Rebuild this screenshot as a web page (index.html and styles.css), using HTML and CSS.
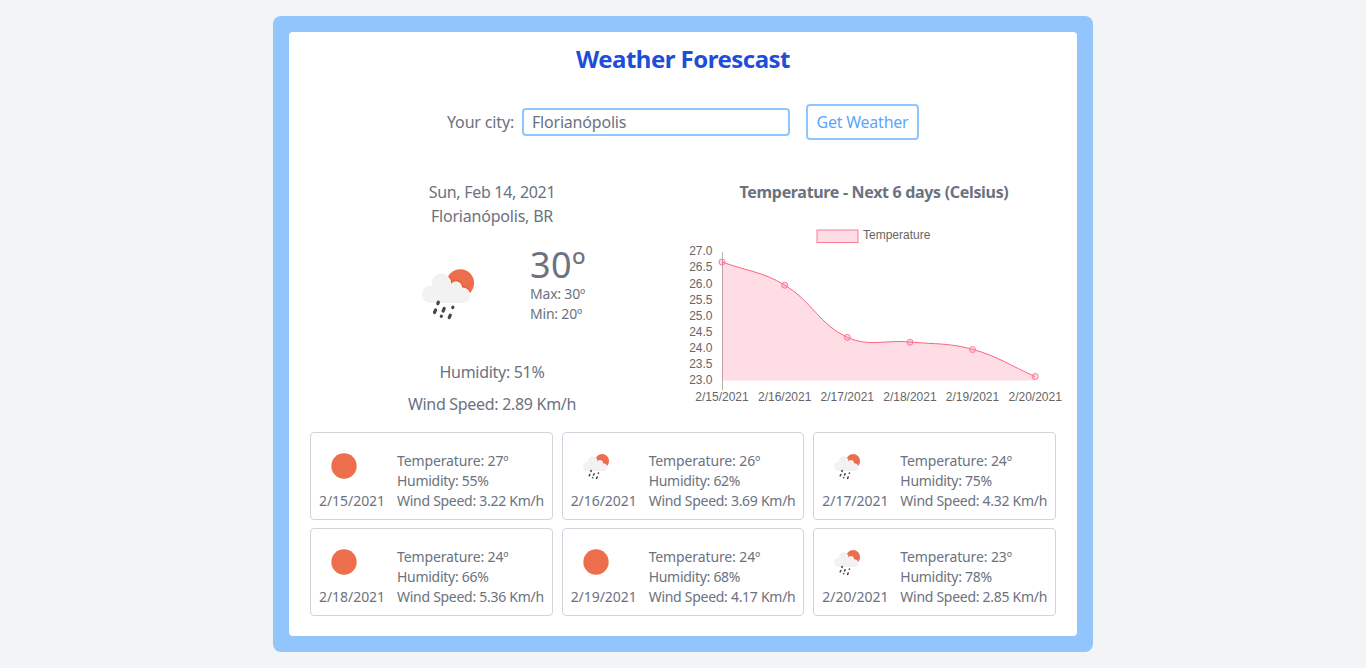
FILE: index.html
```html
<!DOCTYPE html>
<html lang="en">
<head>
<meta charset="utf-8">
<title>Weather Forescast</title>
<link rel="stylesheet" href="styles.css">
</head>
<body>
<svg class="defs" aria-hidden="true">
  <clipPath id="sun-clip"><circle cx="62.300" cy="40" r="13.800"/></clipPath>
  <symbol id="rain" viewBox="0 0 100 100">
    <circle cx="62.300" cy="40" r="13.800" fill="#ec6e4c"/>
    <g clip-path="url(#sun-clip)" fill="#e9502c"><circle cx="43.500" cy="40.300" r="10.600"/><circle cx="58" cy="44.300" r="7"/><circle cx="64.700" cy="52.300" r="8.700"/></g>
    <g fill="#f2f2f2"><circle cx="32.700" cy="51.300" r="8.700"/><circle cx="43.500" cy="40.300" r="9.700"/><circle cx="58" cy="44.300" r="6.100"/><circle cx="64.700" cy="52.300" r="7.700"/><path d="M32.700 60V46L40 42H58L65 50V60z"/></g>
    <path d="M40.400 59.200l-.6 1.500M37.600 67l-1.100 2.500M46.200 65.500l-1.100 2.500M43.400 73.200l-.1.200M54.900 64.100l-.2.400M52.300 72.200l-1.100 2.400" fill="none" stroke="#484848" stroke-width="3.200" stroke-linecap="round"/>
  </symbol>
  <symbol id="sun" viewBox="0 0 100 100"><circle cx="50" cy="50" r="25.4" fill="#ec6e4c"/></symbol>
</svg>
<main class="panel">
 <div class="content">
  <h1 class="title">Weather Forescast</h1>
  <form class="search">
    <label class="search-label" for="city">Your city:</label>
    <input class="search-input" id="city" value="Florianópolis">
    <button class="search-button" type="button">Get Weather</button>
  </form>
  <div class="overview">
    <section class="today">
      <p class="date">Sun, Feb 14, 2021</p>
      <p class="place">Florianópolis, BR</p>
      <div class="now">
        <svg class="icon-large"><use href="#rain"/></svg>
        <div class="temps">
          <p class="degrees">30º</p>
          <p class="range">Max: 30º</p>
          <p class="range">Min: 20º</p>
        </div>
      </div>
      <p class="humidity">Humidity: 51%</p>
      <p class="wind">Wind Speed: 2.89 Km/h</p>
    </section>
    <section class="trend">
      <h2 class="trend-title">Temperature - Next 6 days (Celsius)</h2>
      <svg class="chart" viewBox="684 220 380 190">
        <rect class="series" x="817" y="230" width="41" height="12.500"/>
        <text x="863" y="239">Temperature</text>
        <g text-anchor="end">
          <text x="712.500" y="255">27.0</text><text x="712.500" y="271">26.5</text><text x="712.500" y="288">26.0</text>
          <text x="712.500" y="304">25.5</text><text x="712.500" y="320">25.0</text><text x="712.500" y="336">24.5</text>
          <text x="712.500" y="352">24.0</text><text x="712.500" y="368">23.5</text><text x="712.500" y="384">23.0</text>
        </g>
        <path class="axis" d="M722.500 252V390"/>
        <path class="area" d="M722 262C747.100 271.200 762.100 271.400 784.700 285C812.300 301.600 819 324.400 847.300 337.300C869.100 347.200 885 339.600 910 342C935 344.400 948.500 342.700 972.500 349.300C998.500 356.500 1010 365.600 1035 376.500V380.500H722z"/>
        <path class="line" d="M722 262C747.100 271.200 762.100 271.400 784.700 285C812.300 301.600 819 324.400 847.300 337.300C869.100 347.200 885 339.600 910 342C935 344.400 948.500 342.700 972.500 349.300C998.500 356.500 1010 365.600 1035 376.500"/>
        <g class="series">
          <circle cx="722" cy="262" r="3"/><circle cx="784.700" cy="285.200" r="3"/><circle cx="847.300" cy="337.400" r="3"/>
          <circle cx="910" cy="342.200" r="3"/><circle cx="972.500" cy="349.500" r="3"/><circle cx="1035.200" cy="376.500" r="3"/>
        </g>
        <g text-anchor="middle">
          <text x="722" y="401">2/15/2021</text><text x="784.700" y="401">2/16/2021</text><text x="847.300" y="401">2/17/2021</text>
          <text x="909.900" y="401">2/18/2021</text><text x="972.500" y="401">2/19/2021</text><text x="1035.200" y="401">2/20/2021</text>
        </g>
      </svg>
    </section>
  </div>
  <div class="days">
    <article class="day"><div class="day-icon"><svg class="icon-small"><use href="#sun"/></svg><p class="day-date">2/15/2021</p></div><div class="day-info"><p class="day-temp">Temperature: 27º</p><p>Humidity: 55%</p><p>Wind Speed: 3.22 Km/h</p></div></article>
    <article class="day"><div class="day-icon"><svg class="icon-small"><use href="#rain"/></svg><p class="day-date">2/16/2021</p></div><div class="day-info"><p class="day-temp">Temperature: 26º</p><p>Humidity: 62%</p><p>Wind Speed: 3.69 Km/h</p></div></article>
    <article class="day"><div class="day-icon"><svg class="icon-small"><use href="#rain"/></svg><p class="day-date">2/17/2021</p></div><div class="day-info"><p class="day-temp">Temperature: 24º</p><p>Humidity: 75%</p><p>Wind Speed: 4.32 Km/h</p></div></article>
    <article class="day"><div class="day-icon"><svg class="icon-small"><use href="#sun"/></svg><p class="day-date">2/18/2021</p></div><div class="day-info"><p class="day-temp">Temperature: 24º</p><p>Humidity: 66%</p><p>Wind Speed: 5.36 Km/h</p></div></article>
    <article class="day"><div class="day-icon"><svg class="icon-small"><use href="#sun"/></svg><p class="day-date">2/19/2021</p></div><div class="day-info"><p class="day-temp">Temperature: 24º</p><p>Humidity: 68%</p><p>Wind Speed: 4.17 Km/h</p></div></article>
    <article class="day"><div class="day-icon"><svg class="icon-small"><use href="#rain"/></svg><p class="day-date">2/20/2021</p></div><div class="day-info"><p class="day-temp">Temperature: 23º</p><p>Humidity: 78%</p><p>Wind Speed: 2.85 Km/h</p></div></article>
  </div>
 </div>
</main>
</body>
</html>
```
FILE: styles.css
```css
* { box-sizing: border-box; }
body { margin: 0; padding: 16px 0; background: #f3f4f6; color: #6b7280; font: 16px/24px "Noto Sans", sans-serif; height: 668px; overflow: hidden; }
p, h1, h2 { margin: 0; white-space: nowrap; }
.defs { position: absolute; width: 0; height: 0; }
.panel { width: 820px; height: 636px; margin: 0 auto; padding: 16px; border-radius: 8px; background: #93c5fd; }
.content { height: 604px; padding: 11px 21px 20px; border-radius: 4px; background: #fff; }
.title { text-align: center; color: #1d4ed8; font-size: 24px; line-height: 32px; font-weight: 700; letter-spacing: -.52px; }
.search { display: flex; align-items: center; justify-content: center; height: 36px; margin-top: 29px; }
.search-label { width: 67px; margin-right: 8px; letter-spacing: -.15px; white-space: nowrap; }
.search-input { width: 268px; height: 28px; border: 2px solid #93c5fd; border-radius: 4px; padding: 0 8px; font: inherit; letter-spacing: -.2px; color: #6b7280; background: #fff; }
.search-button { width: 113px; height: 36px; margin-left: 16px; border: 2px solid #93c5fd; border-radius: 4px; padding: 0; background: #fff; color: #60a5fa; font: inherit; letter-spacing: -.23px; white-space: nowrap; }
.overview { display: flex; margin-top: 40px; height: 252px; }
.today { width: 364px; flex: none; text-align: center; letter-spacing: -.3px; }
.place { letter-spacing: -.2px; }
.now { display: flex; height: 108px; margin-top: 15px; padding-left: 88px; text-align: left; }
.icon-large { width: 100px; height: 100px; flex: none; }
.temps { margin-left: 32px; }
.degrees { font-size: 36px; line-height: 38px; margin-top: 3px; letter-spacing: .4px; }
.range { font-size: 14px; line-height: 20px; letter-spacing: -.2px; }
.humidity { margin-top: 9px; }
.wind { margin-top: 8px; }
.trend { width: 400px; flex: none; }
.trend-title { font-size: 16px; line-height: 24px; text-align: center; letter-spacing: -.32px; }
.chart { display: block; width: 380px; height: 190px; margin: 16px 0 0 10px; font: 12px "Liberation Sans", sans-serif; fill: #666; }
.series { fill: rgba(255,99,132,.22); stroke: #fc7b97; stroke-width: 1; }
.area { fill: rgba(255,99,132,.22); }
.line { fill: none; stroke: #ff6384; }
.axis { stroke: #b4b4b4; }
.days { display: grid; grid-template-columns: repeat(3, minmax(0, 1fr)); gap: 8px 9px; }
.day { display: flex; height: 88px; border: 1px solid #d1d5db; border-radius: 4px; padding: 8px; font-size: 14px; line-height: 20px; letter-spacing: -.28px; }
.day-icon { width: 66px; flex: none; text-align: center; }
.day-date { letter-spacing: -.05px; }
.icon-small { display: block; width: 50px; height: 50px; }
.day-info { margin: 10px 0 0 12px; }
.day-temp { letter-spacing: -.12px; }
```
